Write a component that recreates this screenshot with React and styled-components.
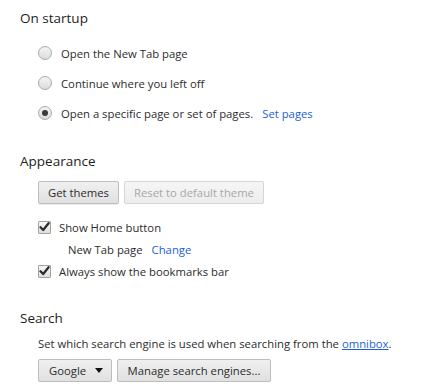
import React from "react";
import styled, { createGlobalStyle } from "styled-components";

const Global = createGlobalStyle`
  html, body { margin: 0; padding: 0; background: #fff; }
  body { font-family: "Open Sans", Lato, sans-serif; font-size: 11.3px; color: #2c2c2c; }
`;

const Page = styled.div`
  padding: 8px 0 0 20px;
  width: 415px;
`;

const Section = styled.section`
  margin-bottom: ${(p) => p.$mb || 0}px;
`;

const Heading = styled.h3`
  margin: 0;
  font-weight: normal;
  font-size: 13.5px;
  line-height: 20px;
  height: 20px;
  color: #1e1e1e;
`;

const Body = styled.div`
  padding-left: 18px;
  display: flex;
  flex-direction: column;
  margin-top: ${(p) => p.$mt || 0}px;
`;

const RadioRow = styled.label`
  display: flex;
  align-items: center;
  height: 30px;
  gap: 9px;
`;

const RadioCircle = styled.span`
  width: 12px;
  height: 12px;
  border-radius: 50%;
  border: 1px solid #a9a9a9;
  background: linear-gradient(#f4f4f4, #dcdcdc);
  display: flex;
  align-items: center;
  justify-content: center;
  flex: none;
  &::after {
    content: "";
    width: 6px;
    height: 6px;
    border-radius: 50%;
    background: ${(p) => (p.$checked ? "#3a3a3a" : "transparent")};
  }
`;

const Link = styled.a`
  color: #1a5fd8;
  text-decoration: ${(p) => (p.$underline ? "underline" : "none")};
  margin-left: ${(p) => p.$ml || 0}px;
  cursor: pointer;
`;

const ButtonRow = styled.div`
  display: flex;
  gap: 5px;
  margin-top: ${(p) => p.$mt || 0}px;
`;

const Button = styled.button`
  font-family: inherit;
  font-size: 11.3px;
  white-space: nowrap;
  height: 23px;
  box-sizing: border-box;
  padding: 0 ${(p) => (p.$select ? 8 : 4)}px 0 ${(p) => (p.$select ? 10 : 4)}px;
  border: 1px solid ${(p) => (p.disabled ? "#d6d6d6" : "#bdbdbd")};
  border-radius: 2px;
  background: ${(p) =>
    p.disabled ? "linear-gradient(#f6f6f6, #ececec)" : "linear-gradient(#f0f0f0, #e0e0e0)"};
  color: ${(p) => (p.disabled ? "#a8a8a8" : "#2c2c2c")};
  width: ${(p) => p.$w}px;
  display: flex;
  align-items: center;
  justify-content: ${(p) => (p.$select ? "space-between" : "center")};
  box-shadow: ${(p) => (p.disabled ? "none" : "0 1px 0 rgba(0,0,0,0.08)")};
`;

const Caret = styled.span`
  width: 0;
  height: 0;
  border-left: 4.5px solid transparent;
  border-right: 4.5px solid transparent;
  border-top: 5px solid #111;
`;

const CheckRow = styled.label`
  display: flex;
  align-items: center;
  height: 22px;
  gap: 8px;
  padding-left: ${(p) => p.$indent || 0}px;
`;

const Box = styled.span`
  width: 11px;
  height: 11px;
  border: 1px solid #a3a3a3;
  border-radius: 1px;
  background: linear-gradient(#f7f7f7, #dedede);
  display: flex;
  align-items: center;
  justify-content: center;
  flex: none;
`;

const Desc = styled.div`
  height: 20px;
  line-height: 20px;
`;

const Spacer = styled.div`
  height: ${(p) => p.$h}px;
`;

function Radio({ checked, children }) {
  return (
    <RadioRow>
      <RadioCircle $checked={checked} />
      <span>{children}</span>
    </RadioRow>
  );
}

function Check({ children }) {
  return (
    <CheckRow>
      <Box>
        <svg width="11" height="10" viewBox="0 0 11 10">
          <path d="M1.5 5.2 L4.2 8 L9.6 1.2" fill="none" stroke="#2a2a2a" strokeWidth="2.2" strokeLinecap="round" strokeLinejoin="round" />
        </svg>
      </Box>
      <span>{children}</span>
    </CheckRow>
  );
}

export default function App() {
  return (
    <Page>
      <Global />
      <Section $mb={23}>
        <Heading>On startup</Heading>
        <Body $mt={10}>
          <Radio>Open the New Tab page</Radio>
          <Radio>Continue where you left off</Radio>
          <Radio checked>
            Open a specific page or set of pages.
            <Link $ml={9}>Set pages</Link>
          </Radio>
        </Body>
      </Section>
      <Section $mb={26}>
        <Heading>Appearance</Heading>
        <Body $mt={10}>
          <ButtonRow>
            <Button $w={81}>Get themes</Button>
            <Button $w={140} disabled>Reset to default theme</Button>
          </ButtonRow>
          <Spacer $h={12} />
          <Check>Show Home button</Check>
          <CheckRow $indent={30}>
            <span>
              New Tab page<Link $ml={9}>Change</Link>
            </span>
          </CheckRow>
          <Check>Always show the bookmarks bar</Check>
        </Body>
      </Section>
      <Section>
        <Heading>Search</Heading>
        <Body $mt={6}>
          <Desc>
            Set which search engine is used when searching from the <Link $underline>omnibox</Link>.
          </Desc>
          <ButtonRow $mt={5}>
            <Button $w={74} $select>
              Google <Caret />
            </Button>
            <Button $w={154}>Manage search engines...</Button>
          </ButtonRow>
        </Body>
      </Section>
    </Page>
  );
}
